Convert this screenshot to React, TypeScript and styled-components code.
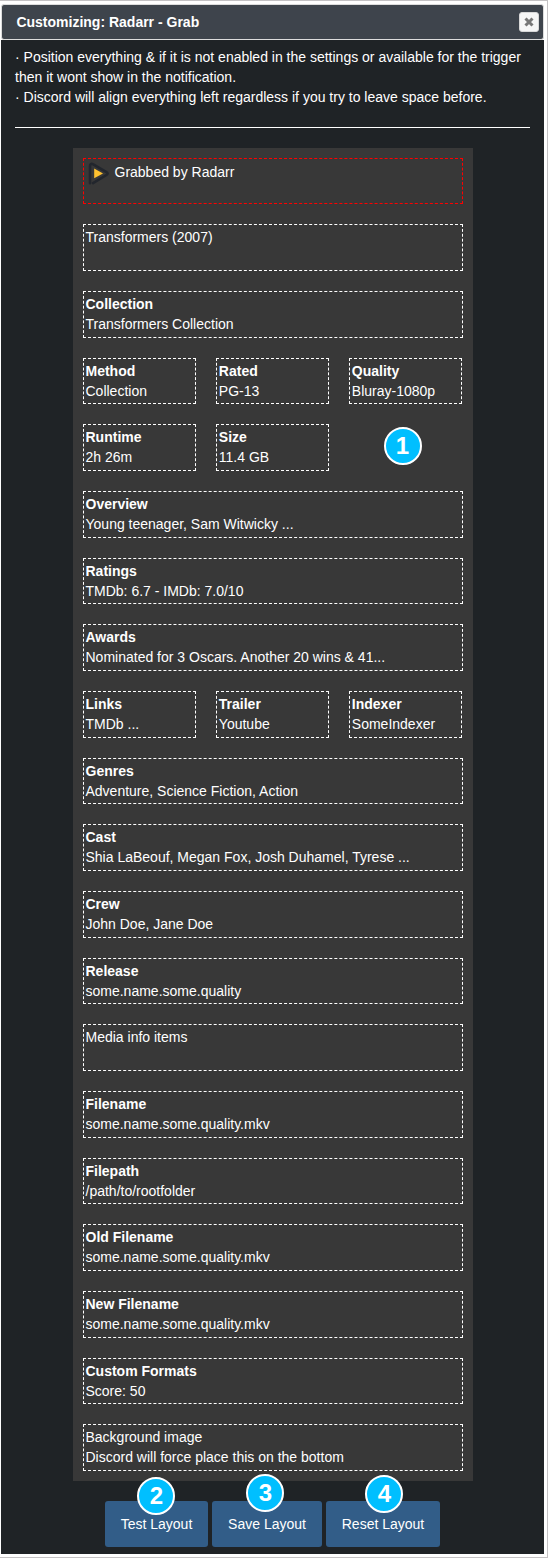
import React from "react";
import styled, { createGlobalStyle } from "styled-components";

const GlobalStyle = createGlobalStyle`
  * { box-sizing: border-box; }
  body {
    margin: 0;
    background: #fff;
    color: #fff;
    font: 14px/20px "Liberation Sans", Arial, sans-serif;
  }
`;

const Dialog = styled.div`
  width: 548px;
  height: 1558px;
  padding: 3px 3px 3px 1px;
  border: 1px solid #c4c2c4;
  border-left: 0;
  background: #fff;
  display: flex;
  flex-direction: column;
`;

const TitleBar = styled.header`
  height: 36px;
  flex: none;
  display: flex;
  align-items: center;
  justify-content: space-between;
  padding: 0 4px 0 14.4px;
  border: 1px solid #dddddd;
  border-radius: 3px;
  background: #3e444c;
  font-weight: 700;
`;

const CloseButton = styled.button`
  width: 20px;
  height: 20px;
  padding: 0;
  display: flex;
  align-items: center;
  justify-content: center;
  border: 1px solid #d8d8d8;
  border-radius: 3px;
  background: #f6f6f6;
`;

const Content = styled.main`
  flex: 1;
  padding: 7px 14px 0;
  background: #1f2326;
`;

const Notes = styled.div`
  height: 81px;
  border-bottom: 1px solid #fff;
  margin-bottom: 20px;
  white-space: nowrap;
`;

const Panel = styled.section`
  width: 400px;
  margin: 0 auto 20px 58px;
  padding: 9.7px 10px 10.3px;
  background: #383838;
  display: grid;
  grid-template-columns: 113.33px 113px 113.67px;
  grid-auto-rows: 46.667px;
  gap: 20px;
`;

const Field = styled.div<{ $wide?: boolean; $color?: string }>`
  grid-column: ${(p) => (p.$wide ? "1 / -1" : "auto")};
  width: ${(p) => (p.$wide ? "380px" : "113px")};
  padding: 2px 1.5px;
  border: 1px dashed ${(p) => p.$color ?? "#fff"};
  white-space: nowrap;
`;

const Label = styled.strong`
  display: block;
`;

const Author = styled.div`
  display: flex;
  gap: 4px;
  line-height: 22px;
`;

const EmptyCell = styled.div`
  position: relative;
`;

const Actions = styled.div`
  display: flex;
  gap: 4px;
  margin-left: 90px;
`;

const ActionButton = styled.button<{ $width: number }>`
  position: relative;
  width: ${(p) => p.$width}px;
  height: 46px;
  padding: 0;
  border: 0;
  border-radius: 3px;
  background: #325d88;
  color: #fff;
  font: inherit;
`;

const Marker = styled.span<{ $x: number; $y: number }>`
  position: absolute;
  left: ${(p) => p.$x}px;
  top: ${(p) => p.$y}px;
  width: 38px;
  height: 38px;
  display: flex;
  align-items: center;
  justify-content: center;
  border: 2px solid #fff;
  border-radius: 50%;
  background: #00bfff;
  font: 700 24px/1 "Liberation Sans", Arial, sans-serif;
`;

const RadarrIcon = () => (
  <svg width="25" height="26" viewBox="0 0 25 26">
    <path
      d="M4 22.2V5.5Q4 1.8 7.3 3.4L20.5 11.2Q22.8 12.6 20.5 14L7 22.2"
      fill="none"
      stroke="#22262d"
      strokeWidth="2.6"
      strokeLinecap="round"
      strokeLinejoin="round"
    />
    <path d="M8.2 7.6L17 12.4L8.2 17.3Z" fill="#ffc230" />
  </svg>
);

type Item = { label?: string; text: string; small?: boolean };

const before: Item[] = [
  { text: "Transformers (2007)" },
  { label: "Collection", text: "Transformers Collection" },
  { label: "Method", text: "Collection", small: true },
  { label: "Rated", text: "PG-13", small: true },
  { label: "Quality", text: "Bluray-1080p", small: true },
  { label: "Runtime", text: "2h 26m", small: true },
  { label: "Size", text: "11.4 GB", small: true },
];

const after: Item[] = [
  { label: "Overview", text: "Young teenager, Sam Witwicky ..." },
  { label: "Ratings", text: "TMDb: 6.7 - IMDb: 7.0/10" },
  { label: "Awards", text: "Nominated for 3 Oscars. Another 20 wins & 41..." },
  { label: "Links", text: "TMDb ...", small: true },
  { label: "Trailer", text: "Youtube", small: true },
  { label: "Indexer", text: "SomeIndexer", small: true },
  { label: "Genres", text: "Adventure, Science Fiction, Action" },
  { label: "Cast", text: "Shia LaBeouf, Megan Fox, Josh Duhamel, Tyrese ..." },
  { label: "Crew", text: "John Doe, Jane Doe" },
  { label: "Release", text: "some.name.some.quality" },
  { text: "Media info items" },
  { label: "Filename", text: "some.name.some.quality.mkv" },
  { label: "Filepath", text: "/path/to/rootfolder" },
  { label: "Old Filename", text: "some.name.some.quality.mkv" },
  { label: "New Filename", text: "some.name.some.quality.mkv" },
  { label: "Custom Formats", text: "Score: 50" },
];

const renderItem = (item: Item, index: number) => (
  <Field key={index} $wide={!item.small}>
    {item.label && <Label>{item.label}</Label>}
    {item.text}
  </Field>
);

export default function App() {
  return (
    <>
      <GlobalStyle />
      <Dialog>
        <TitleBar>
          <span>Customizing: Radarr - Grab</span>
          <CloseButton aria-label="Close">
            <svg width="10" height="10" viewBox="0 0 10 10">
              <path d="M1.5 1.5L8.5 8.5M8.5 1.5L1.5 8.5" stroke="#777" strokeWidth="3" />
            </svg>
          </CloseButton>
        </TitleBar>
        <Content>
          <Notes>
            · Position everything &amp; if it is not enabled in the settings or available for the trigger
            <br />
            then it wont show in the notification.
            <br />· Discord will align everything left regardless if you try to leave space before.
          </Notes>
          <Panel>
            <Field $wide $color="#f00">
              <Author>
                <RadarrIcon />
                <span>Grabbed by Radarr</span>
              </Author>
            </Field>
            {before.map(renderItem)}
            <EmptyCell>
              <Marker $x={34.2} $y={2.6}>1</Marker>
            </EmptyCell>
            {after.map(renderItem)}
            <Field $wide>
              Background image
              <br />
              Discord will force place this on the bottom
            </Field>
          </Panel>
          <Actions>
            <ActionButton $width={103}>
              Test Layout
              <Marker $x={32.4} $y={-24.2}>2</Marker>
            </ActionButton>
            <ActionButton $width={110}>
              Save Layout
              <Marker $x={34.4} $y={-27.3}>3</Marker>
            </ActionButton>
            <ActionButton $width={114}>
              Reset Layout
              <Marker $x={39.4} $y={-26.3}>4</Marker>
            </ActionButton>
          </Actions>
        </Content>
      </Dialog>
    </>
  );
}
